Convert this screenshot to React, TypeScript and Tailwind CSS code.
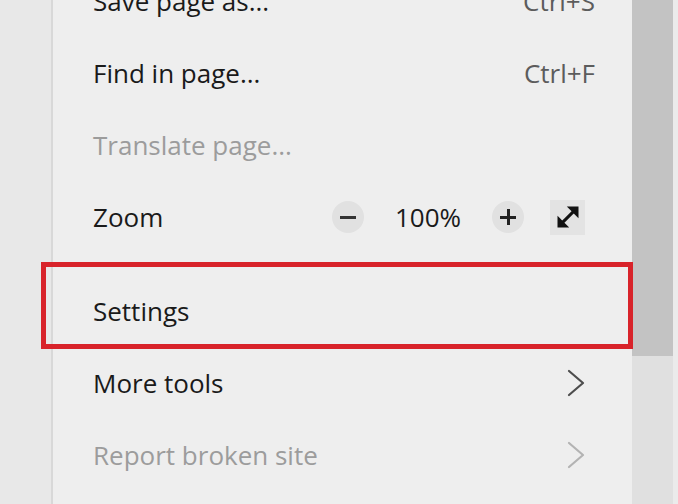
import React from "react";

function Chevron({ muted }: { muted?: boolean }) {
  return (
    <svg width="18" height="28" viewBox="0 0 18 28" fill="none">
      <path
        d="M2 2 L16 14 L2 26"
        stroke={muted ? "#b3b3b3" : "#4d4d4d"}
        strokeWidth="2.2"
        strokeLinecap="round"
        strokeLinejoin="round"
      />
    </svg>
  );
}

function ExpandIcon() {
  return (
    <svg width="28" height="28" viewBox="0 0 24 24">
      <line x1="6.5" y1="17.5" x2="17.5" y2="6.5" stroke="#111" strokeWidth="2.6" />
      <polygon points="21,3 11,3 21,13" fill="#111" />
      <polygon points="3,21 13,21 3,11" fill="#111" />
    </svg>
  );
}

function Row({
  label,
  muted,
  right,
  pr = "pr-[47px]",
}: {
  label: string;
  muted?: boolean;
  right?: React.ReactNode;
  pr?: string;
}) {
  return (
    <div className={`h-[72px] flex items-center justify-between pl-[40px] ${pr}`}>
      <span className={muted ? "text-[#9c9c9c]" : "text-[#1a1a1a]"}>{label}</span>
      {right}
    </div>
  );
}

export default function App() {
  return (
    <div
      className="relative w-[678px] h-[504px] flex overflow-hidden bg-[#e9e9e9] text-[26px]"
      style={{ fontFamily: '"Open Sans", "Noto Sans", sans-serif' }}
    >
      {/* page behind the menu */}
      <div className="w-[53px] bg-[#e8e8e8] border-r-2 border-[#d8d8d8]" />

      {/* menu */}
      <div className="flex-1 bg-[#eeeeee] flex flex-col -mt-[35px]">
        <Row
          label="Save page as..."
          pr="pr-[37px]"
          right={<span className="text-[#5c5c5c]">Ctrl+S</span>}
        />
        <Row
          label="Find in page..."
          pr="pr-[37px]"
          right={<span className="text-[#5c5c5c]">Ctrl+F</span>}
        />
        <Row label="Translate page..." muted />
        <div className="h-[72px] flex items-center pl-[40px] pr-[47px]">
          <span className="text-[#1a1a1a]">Zoom</span>
          <div className="ml-auto flex items-center">
            <div className="w-8 h-8 rounded-full bg-[#e1e1e1] flex items-center justify-center">
              <div className="w-[16px] h-[3px] bg-[#333]" />
            </div>
            <span className="w-[128px] text-center text-[#1a1a1a]">100%</span>
            <div className="relative w-8 h-8 rounded-full bg-[#e1e1e1] flex items-center justify-center">
              <div className="w-[16px] h-[3px] bg-[#222]" />
              <div className="absolute w-[3px] h-[16px] bg-[#222]" />
            </div>
            <div className="ml-[26px] w-[35px] h-[35px] bg-[#e3e3e3] flex items-center justify-center">
              <ExpandIcon />
            </div>
          </div>
        </div>
        <div className="h-[22px] flex items-center">
          <div className="w-full h-px bg-[#d4d4d4]" />
        </div>
        <Row label="Settings" />
        <Row label="More tools" right={<Chevron />} />
        <Row label="Report broken site" muted right={<Chevron muted />} />
      </div>

      {/* scrollbar */}
      <div className="w-[41px] bg-[#e0e0e0] flex flex-col">
        <div className="h-[356px] bg-[#c3c3c3]" />
      </div>
      <div className="w-[5px] bg-[#ebebeb]" />

      {/* red annotation box */}
      <div className="absolute left-[41px] top-[262px] w-[592px] h-[87px] border-[5px] border-[#d8232a]" />
    </div>
  );
}
